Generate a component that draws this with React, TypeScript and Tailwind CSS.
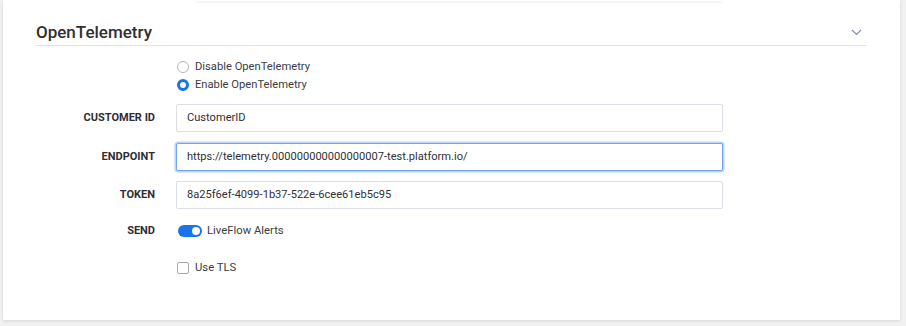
import React from "react";

export default function App() {
  const font = { fontFamily: "Roboto, 'Liberation Sans', sans-serif" };
  return (
    <div className="w-[906px] h-[326px] bg-[#f1f1f1] overflow-hidden" style={font}>
      <div className="ml-[3px] w-[897px] h-[320px] bg-white shadow-[0_1px_3px_rgba(0,0,0,0.12)] flex flex-col">
        <div className="ml-[193px] w-[526px] h-[1px] bg-white shadow-[0_1px_3px_rgba(0,0,0,0.15)]" />
        <div className="mx-[33px] mt-[19px] h-[26px] border-b border-[#dfe4ec] flex items-start justify-between">
          <span className="text-[17px] leading-[24px] font-medium text-[#2f2f33]">OpenTelemetry</span>
          <svg className="mt-[9px] mr-[5px]" width="11" height="7" viewBox="0 0 11 7">
            <path d="M1 1 L5.5 5.5 L10 1" fill="none" stroke="#7f8fae" strokeWidth="1.2" />
          </svg>
        </div>

        <div className="ml-[33px] mt-[14px] flex flex-col text-[11px] text-[#3c3c44]">
          <div className="flex">
            <div className="w-[119px]" />
            <div className="ml-[21px] flex flex-col gap-[5px]">
              <label className="flex items-center h-[13px]">
                <span className="w-[12px] h-[12px] ml-[1px] rounded-full border border-[#b5b5b9] bg-white" />
                <span className="ml-[6px] text-[11.2px] leading-[13px]">Disable OpenTelemetry</span>
              </label>
              <label className="flex items-center h-[13px]">
                <span className="w-[12px] h-[12px] ml-[1px] rounded-full border-[3.5px] border-[#1a73e8] bg-white" />
                <span className="ml-[6px] text-[11.2px] leading-[13px]">Enable OpenTelemetry</span>
              </label>
            </div>
          </div>

          <Row label="CUSTOMER ID" className="mt-[13px]">
            <Input value="CustomerID" />
          </Row>
          <Row label="ENDPOINT" className="mt-[11px]">
            <Input value="https://telemetry.000000000000000007-test.platform.io/" focused />
          </Row>
          <Row label="TOKEN" className="mt-[10px]">
            <Input value="8a25f6ef-4099-1b37-522e-6cee61eb5c95" />
          </Row>

          <div className="flex items-center mt-[15px] h-[14px]">
            <div className="w-[119px] text-right font-bold text-[#2e2e36] text-[11px]">SEND</div>
            <div className="ml-[23px] flex items-center">
              <span className="w-[24px] h-[12px] rounded-full bg-[#1a73e8] flex items-center justify-end pr-[2px]">
                <span className="w-[8px] h-[8px] rounded-full bg-white" />
              </span>
              <span className="ml-[5px] text-[11.3px]">LiveFlow Alerts</span>
            </div>
          </div>

          <div className="flex items-center mt-[23px] h-[14px]">
            <div className="w-[119px]" />
            <div className="ml-[22px] flex items-center">
              <span className="w-[12px] h-[12px] rounded-[2px] border border-[#a9a9b0] bg-white" />
              <span className="ml-[6px] text-[11.3px]">Use TLS</span>
            </div>
          </div>
        </div>
      </div>
    </div>
  );
}

function Row({ label, children, className = "" }: { label: string; children: React.ReactNode; className?: string }) {
  return (
    <div className={"flex items-center " + className}>
      <div className="w-[119px] text-right font-bold text-[#2e2e36] text-[11px]">{label}</div>
      <div className="ml-[21px]">{children}</div>
    </div>
  );
}

function Input({ value, focused = false }: { value: string; focused?: boolean }) {
  return (
    <div
      className={
        "w-[547px] h-[28px] rounded-[2px] bg-white flex items-center pl-[10px] text-[11.1px] text-[#2f2f35] " +
        (focused
          ? "border border-[#6ea4f0] shadow-[0_0_0_1.5px_#bcd6fb]"
          : "border border-[#dcdde6]")
      }
    >
      {value}
    </div>
  );
}
